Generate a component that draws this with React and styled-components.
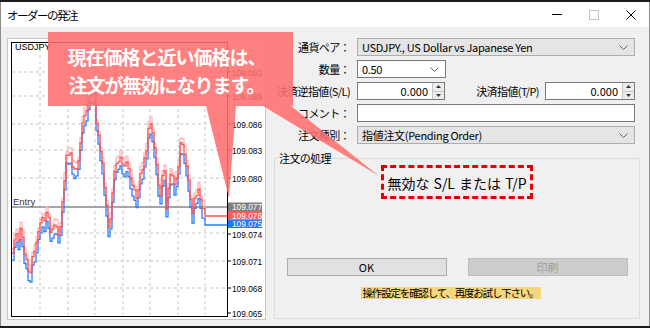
import React from 'react';
import styled, { createGlobalStyle } from 'styled-components';

const GlobalStyle = createGlobalStyle`
  html, body { margin: 0; padding: 0; background: #1c1e1c; }
  body { font-family: "Noto Sans CJK JP", "Noto Sans", sans-serif; color: #000; }
`;

// price chart data, in page coordinates
const keys = [
  [12, 262], [15, 238], [18, 250], [21, 236], [24, 262], [27, 272], [29, 289], [32, 268], [35, 258],
  [38, 240], [41, 226], [44, 232], [47, 218], [50, 240], [54, 232], [58, 242], [61, 228], [63, 200],
  [66, 165], [69, 160], [72, 175], [75, 180], [78, 170], [80, 150], [83, 128], [86, 118], [90, 104],
  [94, 100], [96, 130], [99, 155], [102, 172], [105, 205], [107, 232], [109, 242], [111, 210],
  [114, 180], [117, 170], [121, 168], [124, 178], [127, 170], [130, 188], [133, 200], [136, 205],
  [139, 190], [142, 178], [145, 165], [148, 138], [151, 133], [154, 158], [157, 183], [159, 215],
  [161, 190], [164, 182], [166, 215], [168, 195], [171, 182], [174, 195], [177, 183], [180, 152],
  [183, 155], [186, 178], [189, 198], [192, 225], [195, 202], [198, 198], [201, 212], [203, 220], [205, 225],
];

const rnd = (i, seed) => {
  const s = Math.sin(i * 12.9898 + seed * 78.233) * 43758.5453;
  return s - Math.floor(s);
};

const baseAt = (x) => {
  for (let k = 0; k < keys.length - 1; k++) {
    const [x0, y0] = keys[k];
    const [x1, y1] = keys[k + 1];
    if (x >= x0 && x <= x1) return y0 + ((y1 - y0) * (x - x0)) / (x1 - x0);
  }
  return keys[keys.length - 1][1];
};

const series = (() => {
  const blue = [];
  const red = [];
  const pink = [];
  let i = 0;
  for (let x = 12; x < 204; x += 2, i++) {
    const b = baseAt(x) + (rnd(i, 1) - 0.5) * 6;
    blue.push([x, b]);
    const r = b - 7 - rnd(i, 2) * 4;
    red.push([x, r]);
    pink.push([x, r - 3 - rnd(i, 3) * 5]);
  }
  blue.push([205, 225]);
  red.push([205, 216]);
  pink.push([205, 214]);
  return { blue, red, pink };
})();

const stepPath = (pts, endX) => {
  let d = `M${pts[0][0]} ${pts[0][1].toFixed(1)}`;
  for (let k = 1; k < pts.length; k++) d += ` H${pts[k][0]} V${pts[k][1].toFixed(1)}`;
  return d + ` H${endX}`;
};

const gridX = [40, 68, 95, 123, 150, 178, 205];
const gridY = [72, 96, 124, 150, 178, 233, 261, 288];
const axis = [
  ['109.092', 72], ['109.089', 96], ['109.086', 124], ['109.083', 150], ['109.080', 178],
  ['109.074', 234], ['109.071', 261], ['109.068', 288], ['109.065', 313],
];
const tags = [
  ['109.077', 202.5, '#7f7f7f'],
  ['109.076', 211, '#ff5a5a'],
  ['109.075', 219.5, '#1f78ff'],
];

const Window = styled.div`
  position: relative;
  box-sizing: border-box;
  width: 650px;
  height: 324px;
  margin-top: 2px;
  background: #f0f0f0;
  border-left: 1px solid #8c8c8c;
  border-right: 1px solid #8c8c8c;
  display: flex;
  flex-direction: column;
  overflow: hidden;
`;

const TitleBar = styled.div`
  height: 25px;
  flex: none;
  background: #fff;
  display: flex;
  align-items: center;
  padding-left: 6px;
`;

const Title = styled.div`
  flex: 1;
  font-size: 11.5px;
  letter-spacing: -1.5px;
`;

const Caption = styled.div`
  width: 37px;
  height: 25px;
  display: flex;
  align-items: center;
  justify-content: center;
`;

const Body = styled.div`
  flex: 1;
  display: flex;
  padding: 11px 9px 0 6px;
`;

const ChartFrame = styled.div`
  box-sizing: border-box;
  width: 259px;
  height: 282px;
  flex: none;
  border: 1px solid #c6c6c6;
  background: #fff;
  svg { display: block; }
`;

const RightPanel = styled.div`
  flex: 1;
  display: flex;
  flex-direction: column;
  padding-bottom: 7px;
`;

const Form = styled.div`
  display: grid;
  grid-template-columns: 84px 1fr;
  grid-auto-rows: 18px;
  column-gap: 7px;
  row-gap: 4px;
  margin-right: 5px;
`;

const Label = styled.div`
  font-size: 11px;
  line-height: 18px;
  text-align: right;
  white-space: nowrap;
  letter-spacing: -0.6px;
`;

const Combo = styled.div`
  box-sizing: border-box;
  width: ${(p) => p.$width || '100%'};
  height: 18px;
  border: 1px solid ${(p) => (p.$white ? '#7a7a7a' : '#adadad')};
  background: ${(p) => (p.$white ? '#fff' : '#e5e5e5')};
  display: flex;
  align-items: center;
  padding: 0 6px 0 4px;
  font-size: 11px;
  letter-spacing: -0.3px;
  span { flex: 1; white-space: nowrap; }
`;

const TextInput = styled.div`
  box-sizing: border-box;
  height: 18px;
  border: 1px solid #7a7a7a;
  background: #fff;
`;

const SpinRow = styled.div`
  display: flex;
  align-items: center;
  justify-content: space-between;
`;

const SpinGroup = styled.div`
  display: flex;
  align-items: center;
  gap: 6px;
`;

const Spin = styled.div`
  box-sizing: border-box;
  width: ${(p) => p.$width}px;
  height: 18px;
  border: 1px solid #7a7a7a;
  background: #fff;
  display: flex;
  font-size: 11px;
`;

const SpinValue = styled.div`
  flex: 1;
  text-align: right;
  padding-right: 4px;
  line-height: 16px;
`;

const SpinButtons = styled.div`
  width: 11px;
  display: flex;
  flex-direction: column;
  border-left: 1px solid #c8c8c8;
  div {
    flex: 1;
    background: #ececec;
    display: flex;
    align-items: center;
    justify-content: center;
  }
  div + div { border-top: 1px solid #c8c8c8; }
`;

const GroupBox = styled.fieldset`
  flex: 1;
  margin: 7px 0 0 8px;
  padding: 0;
  min-width: 0;
  border: 1px solid #dcdcdc;
  display: flex;
  flex-direction: column;
  align-items: center;
  legend {
    margin-left: 3px;
    padding: 0 1px;
    font-size: 11px;
    line-height: 14px;
    letter-spacing: -0.6px;
  }
`;

const ErrorBox = styled.div`
  box-sizing: border-box;
  width: 152px;
  height: 34px;
  border: 3px dashed #e40000;
  display: flex;
  align-items: center;
  justify-content: center;
  font-size: 14px;
  white-space: nowrap;
  word-spacing: 1px;
  padding-top: 1px;
`;

const ButtonRow = styled.div`
  display: flex;
  gap: 21px;
  margin-top: 59px;
`;

const Button = styled.div`
  box-sizing: border-box;
  width: 160px;
  height: 18px;
  border: 1px solid ${(p) => (p.$disabled ? '#bfbfbf' : '#adadad')};
  background: ${(p) => (p.$disabled ? '#cccccc' : '#e1e1e1')};
  color: ${(p) => (p.$disabled ? '#9d9d9d' : '#000')};
  font-size: 11px;
  line-height: 16px;
  text-align: center;
`;

const Message = styled.div`
  margin-top: 11px;
  margin-right: 12px;
  background: #f5d67c;
  font-size: 10.5px;
  line-height: 12px;
  letter-spacing: -1.2px;
  padding: 0 3px 0 2px;
  white-space: nowrap;
`;

const Callout = styled.div`
  position: absolute;
  inset: 0;
  pointer-events: none;
  svg { position: absolute; left: 0; top: 0; }
`;

const CalloutText = styled.div`
  position: absolute;
  left: 47px;
  top: 32px;
  width: 245px;
  height: 74px;
  display: flex;
  flex-direction: column;
  align-items: center;
  justify-content: center;
  color: #fff;
  font-weight: 700;
  font-size: 19px;
  line-height: 28px;
  letter-spacing: -1px;
  padding-right: 8px;
  box-sizing: border-box;
`;

const Chevron = () => (
  <svg width="9" height="5" viewBox="0 0 9 5">
    <polyline points="0.5,0.5 4.5,4.5 8.5,0.5" fill="none" stroke="#606060" strokeWidth="1" />
  </svg>
);

const Arrow = ({ up }) => (
  <svg width="5" height="3" viewBox="0 0 5 3">
    <polygon points={up ? '0,3 2.5,0 5,3' : '0,0 2.5,3 5,0'} fill="#333" />
  </svg>
);

const SpinBox = ({ width, value }) => (
  <Spin $width={width}>
    <SpinValue>{value}</SpinValue>
    <SpinButtons>
      <div><Arrow up /></div>
      <div><Arrow /></div>
    </SpinButtons>
  </Spin>
);

const Chart = () => (
  <svg width="257" height="280" viewBox="8 39 257 280">
    <defs>
      <clipPath id="plot">
        <rect x="12" y="43" width="215.5" height="272" />
      </clipPath>
    </defs>
    {gridX.map((x) => (
      <line key={x} x1={x} y1="43" x2={x} y2="315" stroke="#c4c4c4" strokeDasharray="3 3" />
    ))}
    {gridY.map((y) => (
      <line key={y} x1="12" y1={y} x2="227" y2={y} stroke="#c4c4c4" strokeDasharray="3 3" />
    ))}
    <line x1="12" y1="207" x2="227" y2="207" stroke="#a6a6a6" strokeWidth="2" />
    <g clipPath="url(#plot)" fill="none" strokeWidth="1.3">
      <path d={stepPath(series.pink, 205)} stroke="#ffb4b4" />
      <path d={stepPath(series.blue, 227)} stroke="#2a7dff" />
      <path d={stepPath(series.red, 227)} stroke="#ff5252" />
    </g>
    <text x="15" y="50" fontFamily="Liberation Sans, sans-serif" fontSize="9">USDJPY.</text>
    <text x="13" y="205" fontFamily="Liberation Sans, sans-serif" fontSize="9.5" fill="#333">Entry</text>
    <rect x="11.5" y="42.5" width="216" height="274" fill="none" stroke="#000" strokeWidth="1" />
    <line x1="11" y1="316.5" x2="228" y2="316.5" stroke="#000" strokeWidth="1" />
    {axis.map(([t, y]) => (
      <g key={t}>
        <line x1="228" y1={y} x2="231" y2={y} stroke="#000" />
        <text x="232" y={y + 3.5} fontFamily="Liberation Sans, sans-serif" fontSize="9.5" textLength="30" lengthAdjust="spacingAndGlyphs">{t}</text>
      </g>
    ))}
    {tags.map(([t, y, c]) => (
      <g key={t}>
        <rect x="228" y={y} width="34" height="8.5" fill={c} />
        <text x="232" y={y + 7.5} fill="#fff" fontFamily="Liberation Sans, sans-serif" fontSize="9.5" textLength="30" lengthAdjust="spacingAndGlyphs">{t}</text>
      </g>
    ))}
  </svg>
);

export default function App() {
  return (
    <>
      <GlobalStyle />
      <Window>
        <TitleBar>
          <Title>オーダーの発注</Title>
          <Caption>
            <svg width="10" height="1"><rect width="10" height="1" fill="#000" /></svg>
          </Caption>
          <Caption>
            <svg width="10" height="10"><rect x="0.5" y="0.5" width="9" height="9" fill="none" stroke="#c4c4c4" /></svg>
          </Caption>
          <Caption>
            <svg width="10" height="10">
              <path d="M0.5 0.5 L9.5 9.5 M9.5 0.5 L0.5 9.5" stroke="#000" strokeWidth="1" />
            </svg>
          </Caption>
        </TitleBar>
        <Body>
          <ChartFrame>
            <Chart />
          </ChartFrame>
          <RightPanel>
            <Form>
              <Label>通貨ペア：</Label>
              <Combo>
                <span>USDJPY., US Dollar vs Japanese Yen</span>
                <Chevron />
              </Combo>
              <Label>数量：</Label>
              <Combo $white $width="89px">
                <span>0.50</span>
                <Chevron />
              </Combo>
              <Label>決済逆指値(S/L)</Label>
              <SpinRow>
                <SpinBox width={88} value="0.000" />
                <SpinGroup>
                  <Label>決済指値(T/P)</Label>
                  <SpinBox width={90} value="0.000" />
                </SpinGroup>
              </SpinRow>
              <Label>コメント：</Label>
              <TextInput />
              <Label>注文種別：</Label>
              <Combo>
                <span>指値注文(Pending Order)</span>
                <Chevron />
              </Combo>
            </Form>
            <GroupBox>
              <legend>注文の処理</legend>
              <ErrorBox>無効な S/L または T/P</ErrorBox>
              <ButtonRow>
                <Button>OK</Button>
                <Button $disabled>印刷</Button>
              </ButtonRow>
              <Message>操作設定を確認して、再度お試し下さい。</Message>
            </GroupBox>
          </RightPanel>
        </Body>
        <Callout>
          <svg width="650" height="328" viewBox="0 2 650 328">
            <path
              d="M47 32 H292 V106 H290 L378 176 L262 106 H235 L228 198 L205 106 H47 Z"
              fill="#ff6e6e"
              fillOpacity="0.88"
            />
          </svg>
          <CalloutText>
            <div>現在価格と近い価格は、</div>
            <div>注文が無効になります。</div>
          </CalloutText>
        </Callout>
      </Window>
    </>
  );
}
